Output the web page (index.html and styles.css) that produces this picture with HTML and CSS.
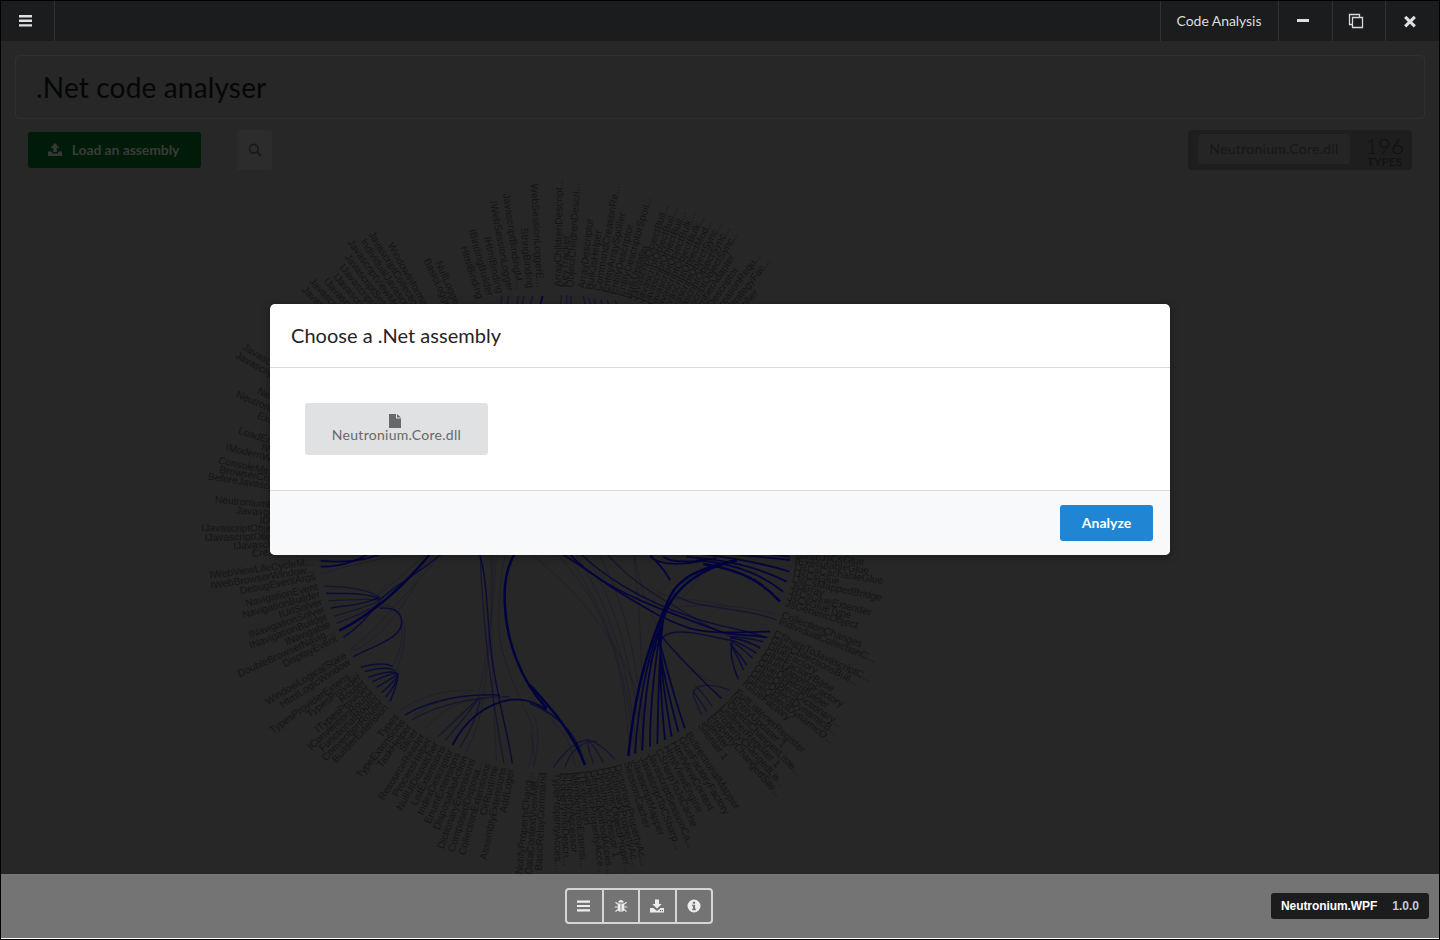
FILE: index.html
```html
<!DOCTYPE html>
<html lang="en">
<head>
<meta charset="utf-8">
<title>Code Analysis</title>
<link rel="stylesheet" href="styles.css">
</head>
<body>
<div class="window">
  <header class="topbar">
    <div class="top-cell menu-cell">
      <svg class="ico-14" viewBox="0 0 14 14"><path class="fill-light" d="M0 1h13v2.400H0zM0 5.600h13V8H0zM0 10.200h13v2.400H0z"/></svg>
    </div>
    <div class="top-spacer"></div>
    <div class="top-cell app-name">Code Analysis</div>
    <div class="top-cell win-cell">
      <svg class="ico-14" viewBox="0 0 14 14"><path class="fill-light" d="M1 5h12v3H1z"/></svg>
    </div>
    <div class="top-cell win-cell">
      <svg class="ico-16" viewBox="0 0 16 16"><path class="line-light" d="M4 11.500H1.500v-10h10V4M4.500 4.500h10v10h-10z"/></svg>
    </div>
    <div class="top-cell win-cell close-cell">
      <svg class="ico-14" viewBox="0 0 14 14"><path class="fill-light" d="M3.300 1.800 7 5.500l3.700-3.700 2.200 2.200L9.200 7.700l3.700 3.500-2.200 2.200L7 9.800l-3.700 3.600-2.200-2.200 3.700-3.500L1.100 4z"/></svg>
    </div>
  </header>

  <main class="content">
    <section class="title-panel">
      <h1 class="title">.Net code analyser</h1>
    </section>

    <div class="toolbar">
      <div class="toolbar-left">
        <button class="load-btn" type="button">
          <svg class="ico-14 upload" viewBox="0 0 14 14"><path d="M7 0 11.500 5H8.800v4H5.200V5H2.500zM0 8.500h4v2h6v-2h4V13H0z"/></svg>
          <span class="load-text">Load an assembly</span>
        </button>
        <button class="search-btn" type="button" aria-label="Search">
          <svg class="ico-14" viewBox="0 0 14 14"><circle class="search-ring" cx="5.800" cy="5.800" r="4.300"/><path class="search-ring" d="m9 9 3.800 3.800"/></svg>
        </button>
      </div>
      <div class="stat-box">
        <div class="stat-name">Neutronium.Core.dll</div>
        <div class="stat-count">
          <span class="stat-num">196</span>
          <span class="stat-label">TYPES</span>
        </div>
      </div>
    </div>

    <svg class="graph" viewBox="1 170 1438 704" preserveAspectRatio="xMinYMin meet">
      <g class="edges" transform="translate(300 170) scale(.3333)">
        <path class="e2" d="M606 378l-3 30M626 378l-4 30M656 378l-6 30M672 378l-6 30M698 378l-8 30M785 375l-3 30M800 375l0 30M812 378l2 30M850 378l6 30M866 382l8 30M882 385l8 30M902 388l8 30M922 390l8 30M945 392l10 20"/>
        <path class="e4" d="M728 378l-8 30"/>
      </g>
      <g class="edges" transform="translate(200 540) scale(.3333)">
        <path class="e5" d="M418 272C520 220 620 130 700 30"/>
        <path class="e3" d="M378 160C450 160 520 160 540 180C590 130 690 80 735 30"/>
        <path class="e3" d="M392 205C450 195 510 190 540 170"/>
        <path class="e3" d="M430 292C480 260 510 220 540 185"/>
        <path class="e2" d="M372 138C440 140 520 150 540 175M385 182C440 180 510 175 540 180M402 228C450 215 510 200 540 180M410 250C450 235 520 205 540 190"/>
        <path class="e3" d="M460 350C540 310 612 290 605 240C600 210 570 200 540 205"/>
        <path class="e1" d="M455 335C500 315 560 280 650 130"/>
        <path class="e3" d="M482 382C520 372 560 368 578 380M495 395C530 385 565 378 585 392M505 412C540 400 570 392 590 398M518 425C550 410 580 400 592 400M530 442C560 425 585 410 595 400M545 458C565 440 590 420 595 400M558 470C575 450 592 425 595 400M570 485C585 450 595 420 595 400"/>
        <path class="e1" d="M578 380C600 340 615 280 600 230C590 200 560 190 540 200M590 395C610 340 620 280 610 240"/>
        <path class="e4" d="M362 62C450 72 520 55 570 30"/>
        <path class="e4" d="M362 80C430 82 490 55 520 30"/>
        <path class="e1" d="M365 100C450 75 540 60 650 30M450 330C540 260 640 130 740 30M520 175C580 130 640 80 690 30M540 200C600 140 660 90 720 30"/>
        <path class="e3" d="M615 525C690 480 800 460 900 465"/>
        <path class="e1" d="M600 510C650 480 700 450 830 450M640 530C700 480 790 455 880 470"/>
        <path class="e2" d="M635 540C720 490 830 470 930 470"/>
        <path class="e1" d="M675 565C740 500 780 480 860 478"/>
        <path class="e2" d="M715 590C760 545 810 500 830 480M735 602C780 550 820 500 840 470"/>
        <path class="e4" d="M758 615C790 550 860 480 950 478C980 478 1005 485 1040 510"/>
        <path class="e2" d="M780 622C800 590 830 540 840 480"/>
        <path class="e1" d="M800 632C820 590 840 550 850 470M830 480C860 380 880 200 890 30M850 460C870 350 880 150 870 30"/>
        <path class="e1" d="M890 665C880 500 870 300 880 30"/>
        <path class="e2" d="M912 670C880 500 850 300 840 30"/>
        <path class="e3" d="M937 670C920 560 880 430 870 300C860 200 860 100 835 30"/>
        <path class="e1" d="M985 680C1000 640 1005 590 990 540C960 470 920 400 900 300C890 220 900 100 920 30"/>
        <path class="e1" d="M1002 680C1015 620 1020 570 1000 520"/>
        <path class="e5" d="M1040 505C960 420 920 300 915 200C910 130 920 80 950 30"/>
      </g>
      <g class="edges" transform="translate(530 540) scale(.3333)">
        <path class="e5" d="M0 435C60 500 130 580 165 675"/>
        <path class="e3" d="M0 490C100 530 150 600 160 670"/>
        <path class="e2" d="M70 682C100 640 140 600 175 600M105 682C125 620 170 600 200 605M190 670C180 640 172 620 172 600M220 668C205 640 190 610 172 600M255 658C230 630 200 605 172 598"/>
        <path class="e1" d="M0 580C15 630 15 660 10 680M135 680C130 640 120 610 100 580C70 540 30 500 0 470"/>
        <path class="e5" d="M295 648C310 500 340 340 420 170C450 110 510 85 620 60"/>
        <path class="e4" d="M315 640C325 500 350 350 400 230M337 632C340 500 360 350 400 230M360 620C360 500 375 350 400 230"/>
        <path class="e4" d="M382 612C385 500 385 350 400 240M405 600C395 500 385 350 395 260M425 590C410 500 385 360 390 260M445 575C420 480 385 350 388 270"/>
        <path class="e4" d="M465 565C430 470 400 340 380 280"/>
        <path class="e5" d="M400 235C430 140 520 80 620 62"/>
        <path class="e5" d="M750 185C700 130 640 90 520 72"/>
        <path class="e4" d="M760 155C700 110 640 75 500 60M770 125C700 90 630 65 470 50M778 95C700 70 620 55 460 35M780 60C700 50 620 45 500 30M780 50C700 40 620 35 560 30"/>
        <path class="e4" d="M420 120C400 80 370 60 350 30M360 50C385 72 440 78 520 62M400 50C420 65 470 70 560 55"/>
        <path class="e4" d="M720 275C640 275 560 285 480 265C400 240 340 200 290 170C220 130 150 70 75 30"/>
        <path class="e4" d="M712 292C650 282 600 290 560 270C480 240 330 190 230 130C180 100 130 60 110 30"/>
        <path class="e3" d="M150 40C210 100 330 180 480 230C560 260 650 270 700 290"/>
        <path class="e2" d="M230 40C280 100 350 150 420 190C500 240 580 290 690 320"/>
        <path class="e3" d="M700 305C660 295 625 290 600 290M690 325C660 305 625 295 600 295M680 340C650 320 620 305 600 300M668 355C645 330 615 310 600 305M650 375C630 345 612 325 602 310M640 390C625 350 608 325 600 310M625 418C605 370 595 330 610 300"/>
        <path class="e3" d="M600 300C560 295 470 265 420 280C390 290 370 320 360 380"/>
        <path class="e2" d="M740 240C650 200 480 210 430 160"/>
        <path class="e1" d="M735 222C650 200 560 190 450 200M590 450C540 420 480 400 420 320C380 260 340 200 310 30"/>
        <path class="e2" d="M600 450C540 430 495 430 490 460M547 500C520 460 500 440 495 440M530 515C505 470 490 460 490 450M515 525C495 480 488 470 490 450"/>
        <path class="e3" d="M575 475C510 420 440 340 385 280"/>
        <path class="e1" d="M70 30C230 200 280 350 300 640M100 30C210 180 280 330 315 640M130 30C210 160 290 300 320 640M160 30C240 170 300 300 335 630M200 30C260 140 320 290 340 600M310 30C330 200 340 400 335 630M0 40C130 140 250 280 320 450M540 60C500 120 460 200 420 170M600 200C500 170 420 190 360 140"/>
      </g>
      <g id="labels" class="labels"></g>
    </svg>

    <div class="overlay">
      <div class="modal">
        <div class="modal-head">Choose a .Net assembly</div>
        <div class="modal-body">
          <button class="file-item" type="button">
            <svg class="file-icon" viewBox="0 0 12 14"><path d="M0 0h7v4.500h5V14H0zM8 0l4 3.500H8z"/></svg>
            <span>Neutronium.Core.dll</span>
          </button>
        </div>
        <div class="modal-foot">
          <button class="analyze-btn" type="button">Analyze</button>
        </div>
      </div>
    </div>
  </main>

  <footer class="bottombar">
    <div class="tool-group">
      <button class="tool" type="button" aria-label="Menu">
        <svg class="ico-14" viewBox="0 0 14 14"><path class="fill-white" d="M0 1.500h13v2.200H0zM0 5.900h13v2.200H0zM0 10.300h13v2.200H0z"/></svg>
      </button>
      <button class="tool" type="button" aria-label="Debug">
        <svg class="ico-14" viewBox="0 0 14 14"><path class="fill-white" d="M4.200 3.600C4.400 1.900 5.500 1 7 1s2.600.9 2.800 2.600zM3.700 4.400h2.900V13C4.800 12.800 3.700 11.500 3.700 9.800zM7.400 4.400h2.900v5.400c0 1.700-1.100 3-2.900 3.200z"/><path class="line-white" d="M3.700 5 1.500 3.300M10.300 5l2.200-1.700M3.500 8H.8M10.500 8h2.700M3.800 10.500 1.500 12.700M10.200 10.500l2.300 2.200"/></svg>
      </button>
      <button class="tool" type="button" aria-label="Save">
        <svg class="ico-14" viewBox="0 0 14 14"><path class="fill-white" d="M5 .5h4v4.500h2.800L7 9.500 2.200 5H5zM0 9h3.300L7 12l3.700-3H14v4.500H0z"/><path class="dots" d="M9.800 11h1.200v1.200H9.800zM11.800 11H13v1.200h-1.200z"/></svg>
      </button>
      <button class="tool" type="button" aria-label="About">
        <svg class="ico-14" viewBox="0 0 14 14"><path class="fill-white" fill-rule="evenodd" d="M7 .5a6.500 6.500 0 1 0 0 13 6.500 6.500 0 0 0 0-13zM5.900 2.700h2.200v2H5.900zM5.200 5.700h2.900v4.100h.8v1.500H5.200V9.800h.8V7.200h-.8z"/></svg>
      </button>
    </div>
    <div class="version">
      <span class="version-name">Neutronium.WPF</span>
      <span class="version-num">1.0.0</span>
    </div>
  </footer>
</div>
<script src="diagram.js"></script>
</body>
</html>
```

FILE: styles.css
```css
* { box-sizing: border-box; }
html, body { margin: 0; padding: 0; height: 100%; }
body { font-family: Lato, "Liberation Sans", sans-serif; background: #000; overflow: hidden; }
button { font: inherit; border: 0; padding: 0; cursor: pointer; }
svg { display: block; }

.window { width: 1440px; height: 940px; border: 1px solid #000; display: flex; flex-direction: column; }

.topbar { height: 40px; flex: none; display: flex; background: #1b1c1e; color: #dcdcdc; }
.top-cell { display: flex; align-items: center; justify-content: center; border-right: 1px solid #303133; }
.menu-cell { width: 54px; padding-right: 4px; }
.top-spacer { flex: 1; border-right: 1px solid #303133; }
.app-name { width: 118px; font-size: 14px; letter-spacing: -.06px; padding: 0 1px 2px 0; }
.win-cell { width: 54px; padding-right: 5px; }
.win-cell:nth-child(5) { width: 53px; padding-right: 6px; }
.close-cell { width: 53px; border-right: 0; padding-right: 6px; }
.ico-14 { width: 14px; height: 14px; }
.ico-16 { width: 16px; height: 16px; }
.fill-light { fill: #e0e0e0; }
.line-light { fill: none; stroke: #d8d8d8; stroke-width: 1.300; }
.fill-white { fill: #ededed; }
.line-white { fill: none; stroke: #ededed; stroke-width: 1.100; }
.dots { fill: #747474; }

.content { position: relative; flex: 1; min-height: 0; background: #272727; display: flex; flex-direction: column; overflow: hidden; }

.title-panel { margin: 14px 14px 0; height: 64px; border: 1px solid #2f2f2f; border-radius: 4px; padding: 0 20px; display: flex; align-items: center; flex: none; }
.title { margin: 0; font-size: 28px; font-weight: 400; color: #060606; line-height: 1; letter-spacing: .17px; }

.toolbar { flex: none; display: flex; justify-content: space-between; align-items: center; height: 40px; margin-top: 11px; padding: 0 27px; }
.toolbar-left { display: flex; align-items: center; gap: 36px; }
.load-btn { width: 173px; height: 36px; background: #001c08; color: #3a3a3a; font-weight: 700; font-size: 14px; border-radius: 3px; display: flex; align-items: center; justify-content: center; gap: 10px; letter-spacing: -.1px; padding-right: 2px; }
.load-text { padding-bottom: 2px; }
.upload { fill: #373737; }
.search-btn { width: 35px; height: 40px; background: #2c2c2c; border-radius: 3px; display: flex; align-items: center; justify-content: center; }
.search-ring { fill: none; stroke: #1a1a1a; stroke-width: 1.800; }
.stat-box { width: 224px; height: 40px; background: #1e1e1e; border-radius: 4px; display: flex; align-items: center; padding-left: 10px; gap: 17px; }
.stat-name { width: 152px; height: 30px; background: #252525; border-radius: 4px; display: flex; align-items: center; justify-content: center; color: #171717; font-size: 14px; letter-spacing: .28px; padding-bottom: 1px; margin-bottom: 2px; }
.stat-count { display: flex; flex-direction: column; align-items: center; color: #111; line-height: 1; width: 35px; }
.stat-num { font-size: 22px; font-weight: 300; height: 24px; line-height: 20px; padding-top: 4px; }
.stat-label { font-size: 12px; line-height: 12px; }

.graph { flex: 1; min-height: 0; width: 100%; }
.edges { fill: none; stroke: #000040; stroke-linecap: butt; filter: blur(.35px); }
.e1 { stroke-width: 3; stroke-opacity: .2; }
.e2 { stroke-width: 4; stroke-opacity: .45; }
.e3 { stroke-width: 4.500; stroke-opacity: .7; }
.e4 { stroke-width: 5.500; stroke-opacity: .85; }
.e5 { stroke-width: 7.500; stroke-opacity: 1; }
.labels text { font-family: "Liberation Sans", Arial, sans-serif; font-size: 10.200px; fill: #151515; }

.overlay { position: absolute; inset: 0; display: flex; justify-content: center; align-items: flex-start; padding-top: 263px; }
.modal { width: 900px; height: 251px; border-radius: 5px; overflow: hidden; background: #fff; display: flex; flex-direction: column; box-shadow: 0 2px 8px rgba(0,0,0,.35); }
.modal-head { height: 64px; flex: none; border-bottom: 1px solid #dbdbdb; padding: 0 21px 1px; display: flex; align-items: center; font-size: 20px; color: #242424; letter-spacing: .02px; }
.modal-body { flex: 1; padding: 35px; }
.file-item { width: 183px; height: 52px; background: #e0e1e3; border-radius: 3px; display: flex; flex-direction: column; align-items: center; justify-content: center; color: #686868; font-size: 14px; letter-spacing: .28px; line-height: 14px; padding-bottom: 3px; }
.file-icon { width: 12px; height: 14px; fill: #686868; margin-left: -3px; }
.modal-foot { height: 65px; flex: none; border-top: 1px solid #dbdbdb; background: #f8f9fb; padding: 14px 17px 0 0; display: flex; justify-content: flex-end; align-items: flex-start; }
.analyze-btn { width: 93px; height: 36px; background: #2086d3; color: #fff; font-size: 14px; font-weight: 700; border-radius: 3px; padding-bottom: 2px; }

.bottombar { height: 65px; flex: none; background: #747474; border-bottom: 1px solid #fff; display: flex; align-items: center; justify-content: space-between; padding: 0 10px 0 564px; }
.tool-group { display: flex; height: 36px; width: 148px; border: 2px solid #d6d6d6; border-radius: 4px; }
.tool { flex: 1; background: transparent; border-right: 2px solid #d6d6d6; display: flex; align-items: center; justify-content: center; }
.tool:last-child { border-right: 0; }
.version { width: 158px; height: 26px; background: #1b1c1e; border-radius: 3px; display: flex; align-items: center; padding: 0 10px; justify-content: space-between; font-family: "Liberation Sans", Arial, sans-serif; font-size: 12px; font-weight: 700; }
.version-name { color: #fff; letter-spacing: -.08px; }
.version-num { color: #c9c9d0; }
```

FILE: diagram.js
```js
var CX = 554, CY = 530, R = 243;
var groups = [
  [-46, 1.8, ["JavascriptFrameCont...", "JavascriptEngineFact...", "IJavascriptCallback...", "IJavascriptObjectB...", "IJavascriptSessionI...", "JavascriptSessionInj...", "JavascriptViewModelU...", "IndividualJavascriptC...", "JavascriptCollectionC...", "WindowInformation"]],
  [-25.2, 1.9, ["BasicLogger", "NullLogger"]],
  [-17.7, 2.4, ["HtmlBinding", "IBindingBuilder", "IHtmlBinding", "IWebSessionLogger", "JavascriptBindingM...", "StringBinding", "WebSessionLoggerE..."]],
  [0.9, 1.45, ["ArrayChildrenDescript...", "KeyTracker", "ObjectChildrenDescri..."]],
  [6.6, 1.85, ["ArrayDescriptor", "BulkJsHelper", "CommandCreationRe...", "EntityArraySpoiler", "EntityDescriptor", "EntityDescriptorSpoil...", "BulkUpdater"]],
  [19, 1.55, ["JavascriptObjectBuil...", "JavascriptObjectBuil...", "JavascriptObjectBuil...", "JavascriptObjectBulk...", "JavascriptObjectBulk...", "JavascriptObjectMod...", "JavascriptObjectSync...", "JavascriptObjectSync...", "JavascriptObjectSync..."]],
  [33, 1.8, ["SubscriberAdapter", "ObjectDescriptor", "ObjectCreationRequ...", "CreationStrategyFac...", "FailureIdentifier", "Failure 1"]],
  [95.9, 1.45, ["BasicJsCsGlue", "IExecutableGlue", "IJsCsCachableGlue", "IJsCsGlue", "IJsCsMappedBridge", "JsArray", "JsCsGlueExtender", "JsCsGlueType", "JsGenericObject"]],
  [110.4, 1.6, ["CollectionChanges", "IndividualCollectionC..."]],
  [115.2, 1.5, ["CSharpToJavascriptC...", "GlueCollectionsBuil...", "GlueFactory", "GlueFactoryBase", "GlueMappingFactory", "GlueObjectBuilder", "GlueObjectDictionary...", "GlueObjectDynamicB...", "GlueObjectDynamicO...", "IGlueFactory"]],
  [131.5, 1.65, ["FullListenerRegister", "IEntityUpdater 1", "IObjectChangesListe...", "ListenerRegister 1", "PropertyChangedLis...", "PropertyChangedSile...", "Silenter", "Silenter 1"]],
  [146.6, 2, ["BidirectionalMapper", "GlueFactoryFactory", "HtmlViewContext", "HtmlViewEngine", "CSharpToJsCache", "JavascriptSessionCa...", "JavascriptToCSharp...", "JavascriptMapper", "SessionCacher"]],
  [164.9, 1.44, ["DictionaryPropertyAc...", "DictionaryPropertyAc...", "DynamicObjectProper...", "DynamicAccessor 1", "GenericMethodAcces...", "GenericPropertyAcce...", "ITExtension", "MemberInfoExtensi...", "PropertyAccessor", "PropertyInfoDescri...", "TypePropertyAcces..."]],
  [182.6, 1.6, ["BasicRelayCommand", "DataContextViewMB...", "INotifyPropertyChang..."]],
  [190.2, 1.88, ["AddLoger", "AssemblyExtensions", "ClrRuntime", "CollectionExtensions", "ComposedDisposa...", "DictionaryExtensions", "DisposableAction", "EnumExtensions", "IndexDescriptor", "ListExtensions", "NullUIDispatcher", "ProcessHelper", "ResourceReader", "Slicer", "TaskHelper", "TypeExtensions", "Types"]],
  [223.6, 1.57, ["BuilderExtension", "ConventionRouter", "FunctionalRouter", "IConventionRouter", "ITypesProvider", "Router", "TypesProvider", "TypesProviderExtens..."]],
  [237.3, 1.8, ["HtmlLogicWindow", "WindowLogicalState"]],
  [243.6, 1.85, ["DisplayEvent", "DoubleBrowserNavig...", "INavigable", "INavigationBuilder", "INavigationSolver", "IUrlSolver", "NavigationBuilder", "NavigationEvent"]],
  [259, 1.75, ["DebugEventArgs", "IWebBrowserWindow...", "IWebViewLifeCycleM..."]],
  [265.5, 1.6, ["CreateObject", "IJavascriptFrame", "IJavascriptObjectFact...", "IJavascriptObjectConv...", "IDispatcher", "JavascriptFrame", "NeutroniumException"]],
  [278.8, 1.45, ["BeforeJavascriptExec...", "BrowserCrashedArgs", "ConsoleMessageArgs"]],
  [284.2, 1.65, ["IModernWebBrowser", "IWebBrowser", "LoadEndEventArgs"]],
  [291.2, 2, ["ExceptionHelper", "NeutroniumExtensions", "NeutroniumLogger"]],
  [298.9, 1.7, ["JavascriptObjectExtension", "JavascriptFrameModelExt"]]
];
var host = document.getElementById("labels");
var NS = "http://www.w3.org/2000/svg";
groups.forEach(function (g) {
  g[2].forEach(function (name, i) {
    var a = g[0] + g[1] * i;
    var norm = ((a % 360) + 360) % 360;
    var left = norm > 180;
    var t = document.createElementNS(NS, "text");
    var base = "rotate(" + (a - 90) + " " + CX + " " + CY + ") translate(" + (CX + R) + " " + CY + ")";
    t.setAttribute("transform", left ? base + " rotate(180)" : base);
    t.setAttribute("text-anchor", left ? "end" : "start");
    t.setAttribute("dy", ".31em");
    t.textContent = name;
    host.appendChild(t);
  });
});
```
